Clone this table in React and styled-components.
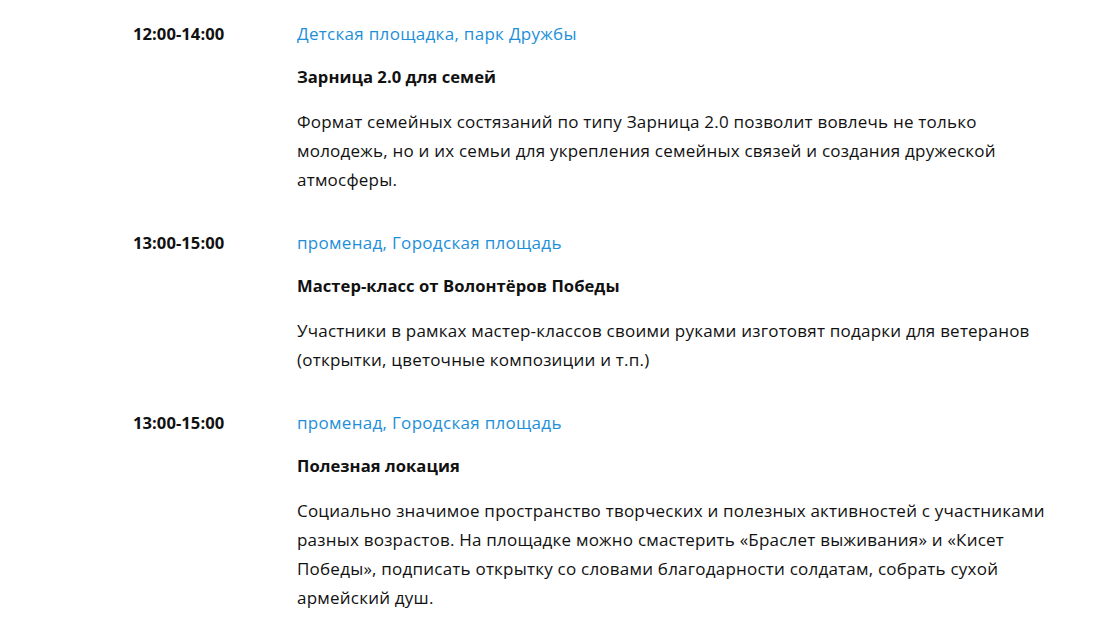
import React from "react";
import styled, { createGlobalStyle } from "styled-components";

const Global = createGlobalStyle`
  html, body { margin: 0; padding: 0; background: #fff; }
  body { font-family: "Open Sans", "Noto Sans", sans-serif; color: #111; }
`;

const Page = styled.div`
  padding: 18.5px 0 0 133px;
  display: flex;
  flex-direction: column;
  gap: 34px;
`;

const Event = styled.div`
  display: grid;
  grid-template-columns: 164px 770px;
`;

const Time = styled.div`
  font-size: 16.6px;
  line-height: 29px;
  font-weight: 700;
  letter-spacing: 0.05px;
  color: #111;
`;

const Body = styled.div`
  display: flex;
  flex-direction: column;
`;

const Place = styled.div`
  font-size: 17px;
  line-height: 29px;
  letter-spacing: 0.3px;
  color: #1e8fd8;
`;

const Title = styled.div`
  margin-top: 14.5px;
  font-size: 16.6px;
  line-height: 29px;
  font-weight: 700;
  letter-spacing: 0.05px;
  color: #111;
`;

const Desc = styled.p`
  margin: 15.5px 0 0;
  font-size: 17px;
  line-height: 29px;
  letter-spacing: 0.22px;
  color: #111;
  max-width: 760px;
`;

const events = [
  {
    time: "12:00-14:00",
    place: "Детская площадка, парк Дружбы",
    title: "Зарница 2.0 для семей",
    desc: "Формат семейных состязаний по типу Зарница 2.0 позволит вовлечь не только молодежь, но и их семьи для укрепления семейных связей и создания дружеской атмосферы.",
  },
  {
    time: "13:00-15:00",
    place: "променад, Городская площадь",
    title: "Мастер-класс от Волонтёров Победы",
    desc: "Участники в рамках мастер-классов своими руками изготовят подарки для ветеранов (открытки, цветочные композиции и т.п.)",
  },
  {
    time: "13:00-15:00",
    place: "променад, Городская площадь",
    title: "Полезная локация",
    desc: "Социально значимое пространство творческих и полезных активностей с участниками разных возрастов. На площадке можно смастерить «Браслет выживания» и «Кисет Победы», подписать открытку со словами благодарности солдатам, собрать сухой армейский душ.",
  },
];

export default function App() {
  return (
    <>
      <Global />
      <Page>
        {events.map((e, i) => (
          <Event key={i}>
            <Time>{e.time}</Time>
            <Body>
              <Place>{e.place}</Place>
              <Title>{e.title}</Title>
              <Desc>{e.desc}</Desc>
            </Body>
          </Event>
        ))}
      </Page>
    </>
  );
}
